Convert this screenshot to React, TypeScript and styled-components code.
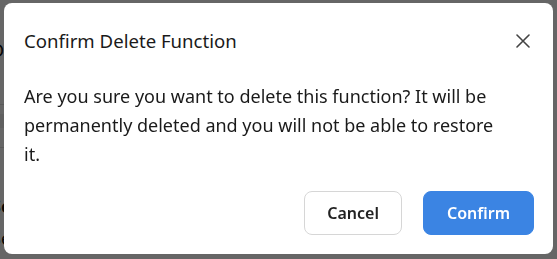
import { FunctionComponent } from "react";
import styled, { createGlobalStyle } from "styled-components";

const GlobalStyle = createGlobalStyle`
  html, body {
    margin: 0;
    padding: 0;
    background: #ffffff;
  }
  body {
    font-family: "Noto Sans", "Open Sans", sans-serif;
    color: #1f1f1f;
  }
`;

// page that sits behind the overlay, only its left edge peeks out
export const Page = styled.div`
  width: 557px;
  height: 259px;
  overflow: hidden;
  display: flex;
  flex-direction: column;
  margin-left: -9px;
`;

export const PageText = styled.div<{ $bold?: boolean; $top: number }>`
  margin-top: ${(p) => p.$top}px;
  font-size: 18px;
  line-height: 20px;
  font-weight: ${(p) => (p.$bold ? 700 : 400)};
  color: #111;
`;

export const PageRule = styled.div<{ $top: number }>`
  margin-top: ${(p) => p.$top}px;
  height: 1px;
  background: #e2e2e2;
`;

export const PageChip = styled.div`
  margin-top: 9px;
  margin-left: 9px;
  width: 4px;
  height: 14px;
  background: #f0f0f0;
`;

export const Overlay = styled.div`
  position: fixed;
  inset: 0;
  background: rgba(0, 0, 0, 0.6);
  display: flex;
  justify-content: center;
  align-items: flex-start;
  padding-top: 3px;
`;

export const Modal = styled.div`
  width: 549px;
  height: 251px;
  box-sizing: border-box;
  background: #ffffff;
  border-radius: 8px;
  display: flex;
  flex-direction: column;
`;

export const ModalHeader = styled.div`
  display: flex;
  align-items: center;
  justify-content: space-between;
  padding: 24px 22px 0 20px;
  height: 27px;
`;

export const ModalTitle = styled.h2`
  margin: 0;
  font-size: 18.6px;
  font-weight: 400;
  line-height: 27px;
  color: #1a1a1a;
`;

export const CloseButton = styled.button`
  border: none;
  background: none;
  padding: 0;
  width: 16px;
  height: 16px;
  display: flex;
  align-items: center;
  justify-content: center;
  cursor: pointer;
  color: #444;
`;

export const ModalBody = styled.p`
  margin: 0;
  padding: 28px 42px 0 20px;
  font-size: 18px;
  line-height: 29px;
  color: #1a1a1a;
`;

export const ModalFooter = styled.div`
  margin-top: auto;
  display: flex;
  justify-content: flex-end;
  gap: 21px;
  padding: 0 19px 19px 0;
`;

export const ActionButton = styled.button<{ $primary?: boolean }>`
  height: 44px;
  padding: 0 ${(p) => (p.$primary ? 23 : 22)}px;
  border-radius: 8px;
  font-family: inherit;
  font-size: 16px;
  font-weight: 600;
  cursor: pointer;
  border: 1px solid ${(p) => (p.$primary ? "#3b84e3" : "#d6d6d6")};
  background: ${(p) => (p.$primary ? "#3b84e3" : "#ffffff")};
  color: ${(p) => (p.$primary ? "#ffffff" : "#222222")};
`;

const CloseIcon = () => (
  <svg width="14" height="14" viewBox="0 0 14 14" fill="none">
    <path
      d="M1 1L13 13M13 1L1 13"
      stroke="currentColor"
      strokeWidth="1.6"
      strokeLinecap="round"
    />
  </svg>
);

const App: FunctionComponent = () => {
  return (
    <>
      <GlobalStyle />
      <Page>
        <PageText $top={40}>Do</PageText>
        <PageRule $top={44} />
        <PageChip />
        <PageRule $top={19} />
        <PageText $bold $top={48}>Se</PageText>
        <PageText $top={12}>Se</PageText>
      </Page>
      <Overlay>
        <Modal role="dialog" aria-labelledby="confirm-title">
          <ModalHeader>
            <ModalTitle id="confirm-title">Confirm Delete Function</ModalTitle>
            <CloseButton aria-label="Close">
              <CloseIcon />
            </CloseButton>
          </ModalHeader>
          <ModalBody>
            Are you sure you want to delete this function? It will be
            permanently deleted and you will not be able to restore it.
          </ModalBody>
          <ModalFooter>
            <ActionButton>Cancel</ActionButton>
            <ActionButton $primary>Confirm</ActionButton>
          </ModalFooter>
        </Modal>
      </Overlay>
    </>
  );
};

export default App;
